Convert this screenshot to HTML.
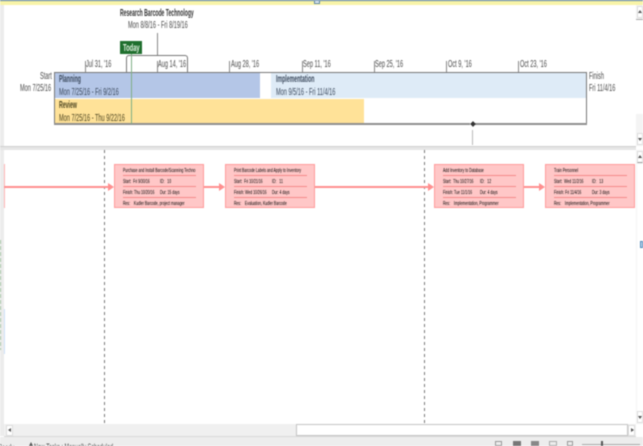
<!DOCTYPE html>
<html><head><meta charset="utf-8">
<style>
html,body{margin:0;padding:0;background:#fff}
#p{position:relative;width:643px;height:446px;overflow:hidden;background:#fff;font-family:"Liberation Sans",sans-serif;color:#4a4a4a;filter:blur(.4px)}
#p div{position:absolute}
.t{white-space:nowrap;font-size:10px;line-height:11px;transform-origin:0 0;transform:scaleX(.56)}
.tk{width:1px;height:11px;top:61px;background:#888}
.d{white-space:nowrap;font-size:5px;line-height:6px;color:#000;transform-origin:0 0;transform:scaleX(.69)}
.c{width:88px;height:42px;top:164px;background:#ffc7c7;border:1px solid #ff9b9b}
.l{height:1px;left:8px;width:73px;background:#f58a8a}
.a{height:2px;top:186px;background:#ff8f8f}
.h{width:0;height:0;top:183px;border-left:6px solid #ff8f8f;border-top:4px solid transparent;border-bottom:4px solid transparent}
.v{width:1px;top:150px;height:273px;background:repeating-linear-gradient(#777 0 3px,#fff 3px 6px)}
</style></head><body>
<div id="p">
<!-- top strip -->
<div style="left:0;top:0;width:643px;height:1px;background:#4f7a9a"></div>
<div style="left:0;top:1px;width:643px;height:4px;background:#f8f4a8"></div>
<div style="left:314px;top:0;width:6px;height:4px;background:#dfe8f0;border:1px solid #5f87a8;box-sizing:border-box"></div>
<div style="left:0;top:5px;width:4px;height:141px;background:#ececec"></div>

<!-- heading -->
<div class="t" style="left:120px;top:8px;color:#333;font-weight:bold;transform:scaleX(.505)">Research Barcode Technology</div>
<div class="t" style="left:128px;top:20px">Mon 8/8/16 - Fri 8/19/16</div>
<div style="left:157px;top:33px;width:1px;height:22px;background:#888"></div>
<div style="left:126px;top:55px;width:62px;height:17px;box-sizing:border-box;border:1px solid #777;border-bottom:0;border-radius:3px 3px 0 0"></div>

<!-- scale -->
<div class="tk" style="left:85px"></div><div class="t" style="left:86px;top:59px">Jul 31, '16</div>
<div class="tk" style="left:157px"></div><div class="t" style="left:158px;top:59px">Aug 14, '16</div>
<div class="tk" style="left:229px"></div><div class="t" style="left:231px;top:59px">Aug 28, '16</div>
<div class="tk" style="left:302px"></div><div class="t" style="left:303px;top:59px">Sep 11, '16</div>
<div class="tk" style="left:374px"></div><div class="t" style="left:375px;top:59px">Sep 25, '16</div>
<div class="tk" style="left:446px"></div><div class="t" style="left:448px;top:59px">Oct 9, '16</div>
<div class="tk" style="left:518px"></div><div class="t" style="left:520px;top:59px">Oct 23, '16</div>

<!-- bars -->
<div style="left:54px;top:72px;width:206px;height:26px;background:#b4c6e7"></div>
<div style="left:271px;top:72px;width:315px;height:26px;background:#deebf7"></div>
<div style="left:54px;top:98.5px;width:310px;height:25px;background:#ffe298"></div>
<div style="left:54px;top:72px;width:533px;height:53px;box-sizing:border-box;border:1px solid #777"></div>
<div style="left:54px;top:123px;width:533px;height:2px;background:#8f8f8f"></div>
<div style="left:470px;top:121px;width:5px;height:7px;background:#fff"></div>
<div style="left:470.5px;top:122px;width:4px;height:4px;background:#333;transform:rotate(45deg)"></div>
<div style="left:472px;top:130px;width:1px;height:15px;background:#bbb"></div>

<div class="t" style="left:59px;top:74px;font-weight:bold;color:#3c4a5e;transform:scaleX(.52)">Planning</div>
<div class="t" style="left:59px;top:87px;color:#3c4a5e">Mon 7/25/16 - Fri 9/2/16</div>
<div class="t" style="left:276px;top:74px;font-weight:bold;color:#3c4a5e;transform:scaleX(.52)">Implementation</div>
<div class="t" style="left:276px;top:87px;color:#3c4a5e">Mon 9/5/16 - Fri 11/4/16</div>
<div class="t" style="left:59px;top:100px;font-weight:bold;color:#4d4520;transform:scaleX(.52)">Review</div>
<div class="t" style="left:59px;top:113px;color:#4d4520">Mon 7/25/16 - Thu 9/22/16</div>

<div class="t" style="left:40px;top:71px">Start</div>
<div class="t" style="left:20px;top:83px">Mon 7/25/16</div>
<div class="t" style="left:589px;top:71px">Finish</div>
<div class="t" style="left:589px;top:83px">Fri 11/4/16</div>

<!-- today -->
<div style="left:120px;top:41px;width:22px;height:13px;background:#1f6f2e"></div>
<div class="t" style="left:123px;top:43px;color:#dff0df;font-weight:bold;transform:scaleX(.58)">Today</div>
<div style="left:131px;top:54px;width:1px;height:70px;background:#7fae86"></div>

<!-- splitter -->
<div style="left:0;top:146px;width:636px;height:4px;background:#e6e6e6;border-top:1px solid #cfcfcf;box-sizing:border-box"></div>

<!-- right scrollbars -->
<div style="left:636px;top:5px;width:7px;height:141px;background:#f4f4f4"></div>
<div style="left:636px;top:19px;width:7px;height:95px;background:#fff;border-top:1px solid #aaa;box-sizing:border-box"></div>
<div style="left:637px;top:6px;width:6px;height:12px;background:#fff;border:1px solid #ddd;box-sizing:border-box"></div>
<div style="left:638px;top:10px;border-left:2px solid transparent;border-right:2px solid transparent;border-bottom:3px solid #555"></div>
<div style="left:637px;top:133px;width:6px;height:12px;background:#fff;border:1px solid #ddd;box-sizing:border-box"></div>
<div style="left:638px;top:138px;border-left:2px solid transparent;border-right:2px solid transparent;border-top:3px solid #555"></div>
<div style="left:636px;top:150px;width:7px;height:274px;background:#f4f4f4"></div>
<div style="left:637px;top:151px;width:6px;height:12px;background:#fff;border:1px solid #ddd;border-bottom:1px solid #999;box-sizing:border-box"></div>
<div style="left:638px;top:155px;border-left:2px solid transparent;border-right:2px solid transparent;border-bottom:3px solid #555"></div>
<div style="left:637px;top:164px;width:6px;height:248px;background:#fff"></div>
<div style="left:640px;top:241px;width:3px;height:7px;background:#cfe4f7;border:1px solid #4f88b8;box-sizing:border-box"></div>
<div style="left:637px;top:411px;width:6px;height:12px;background:#fff;border:1px solid #ddd;box-sizing:border-box"></div>
<div style="left:638px;top:416px;border-left:2px solid transparent;border-right:2px solid transparent;border-top:3px solid #555"></div>

<!-- lower left strip -->
<div style="left:0;top:150px;width:4px;height:286px;background:#ececec"></div>
<div style="left:0;top:240px;width:1px;height:110px;background:repeating-linear-gradient(#9fc09f 0 4px,#ececec 4px 6px)"></div>
<div style="left:4px;top:309px;width:1px;height:45px;background:#cfe2fb"></div>

<!-- dashed dividers -->
<div class="v" style="left:104px"></div>
<div class="v" style="left:424px"></div>

<!-- network links -->
<div style="left:4px;top:164px;width:1px;height:44px;background:#ffb5b5"></div>
<div class="a" style="left:4px;width:104px"></div><div class="h" style="left:108px"></div>
<div class="a" style="left:204px;width:15px"></div><div class="h" style="left:219px"></div>
<div class="a" style="left:315px;width:113px"></div><div class="h" style="left:428px"></div>
<div class="a" style="left:524px;width:15px"></div><div class="h" style="left:539px"></div>

<!-- cards -->
<div class="c" style="left:114px">
<div class="l" style="top:10px"></div><div class="l" style="top:21px"></div><div class="l" style="top:32px"></div>
<div class="d" style="left:8px;top:3px">Purchase and Install Barcode/Scanning Techno</div>
<div class="d" style="left:8px;top:14px">Start:&nbsp; Fri 9/30/16</div><div class="d" style="left:45px;top:14px">ID:&nbsp;&nbsp; 10</div>
<div class="d" style="left:8px;top:25px">Finish: Thu 10/20/16</div><div class="d" style="left:45px;top:25px">Dur: 15 days</div>
<div class="d" style="left:8px;top:36px">Res: &nbsp;&nbsp; Kudler Barcode, project manager</div>
</div>
<div class="c" style="left:225px">
<div class="l" style="top:10px"></div><div class="l" style="top:21px"></div><div class="l" style="top:32px"></div>
<div class="d" style="left:8px;top:3px">Print Barcode Labels and Apply to Inventory</div>
<div class="d" style="left:8px;top:14px">Start:&nbsp; Fri 10/21/16</div><div class="d" style="left:46px;top:14px">ID:&nbsp;&nbsp; 11</div>
<div class="d" style="left:8px;top:25px">Finish: Wed 10/26/16</div><div class="d" style="left:46px;top:25px">Dur: 4 days</div>
<div class="d" style="left:8px;top:36px">Res: &nbsp;&nbsp; Evaluation, Kudler Barcode</div>
</div>
<div class="c" style="left:434px">
<div class="l" style="top:10px"></div><div class="l" style="top:21px"></div><div class="l" style="top:32px"></div>
<div class="d" style="left:8px;top:3px">Add Inventory to Database</div>
<div class="d" style="left:8px;top:14px">Start:&nbsp; Thu 10/27/16</div><div class="d" style="left:45px;top:14px">ID:&nbsp;&nbsp; 12</div>
<div class="d" style="left:8px;top:25px">Finish: Tue 11/1/16</div><div class="d" style="left:45px;top:25px">Dur: 4 days</div>
<div class="d" style="left:8px;top:36px">Res: &nbsp;&nbsp; Implementation, Programmer</div>
</div>
<div class="c" style="left:545px">
<div class="l" style="top:10px"></div><div class="l" style="top:21px"></div><div class="l" style="top:32px"></div>
<div class="d" style="left:8px;top:3px">Train Personnel</div>
<div class="d" style="left:8px;top:14px">Start:&nbsp; Wed 11/2/16</div><div class="d" style="left:46px;top:14px">ID:&nbsp;&nbsp; 13</div>
<div class="d" style="left:8px;top:25px">Finish: Fri 11/4/16</div><div class="d" style="left:46px;top:25px">Dur: 3 days</div>
<div class="d" style="left:8px;top:36px">Res: &nbsp;&nbsp; Implementation, Programmer</div>
</div>

<!-- horizontal scrollbar -->
<div style="left:4px;top:424px;width:632px;height:13px;background:#f0f0f0;border-bottom:1px solid #d8d8d8;box-sizing:border-box"></div>
<div style="left:6px;top:425px;width:7px;height:11px;background:#fff;border:1px solid #ddd;box-sizing:border-box"></div>
<div style="left:8px;top:428px;border-top:2px solid transparent;border-bottom:2px solid transparent;border-right:3px solid #555"></div>
<div style="left:296px;top:424px;width:332px;height:12px;background:#fff;border:1px solid #c4c4c4;box-sizing:border-box"></div>
<div style="left:628px;top:425px;width:7px;height:11px;background:#fff;border:1px solid #ddd;box-sizing:border-box"></div>
<div style="left:631px;top:428px;border-top:2px solid transparent;border-bottom:2px solid transparent;border-left:3px solid #555"></div>

<!-- status bar -->
<div style="left:0;top:437px;width:643px;height:9px;background:#ededed"></div>
<div class="t" style="left:-2px;top:442px;font-size:8px;transform:scaleX(.7)">Ready</div>
<div style="left:29px;top:442px;border-left:2px solid transparent;border-right:2px solid transparent;border-bottom:4px solid #555"></div>
<div class="t" style="left:34px;top:442px;font-size:9px;transform:scaleX(.6)">New Tasks : Manually Scheduled</div>
<div style="left:495px;top:441px;width:7px;height:5px;border:1px solid #999;box-sizing:border-box"></div>
<div style="left:513px;top:441px;width:8px;height:5px;background:#777"></div>
<div style="left:531px;top:441px;width:8px;height:5px;background:#888"></div>
<div style="left:549px;top:441px;width:8px;height:5px;border:1px solid #aaa;box-sizing:border-box"></div>
<div style="left:567px;top:441px;width:6px;height:5px;border:1px solid #999;box-sizing:border-box"></div>
<div style="left:582px;top:444px;width:58px;height:1px;background:#aaa"></div>
<div style="left:601px;top:441px;width:2px;height:5px;background:#555"></div>
</div>
</body></html>
